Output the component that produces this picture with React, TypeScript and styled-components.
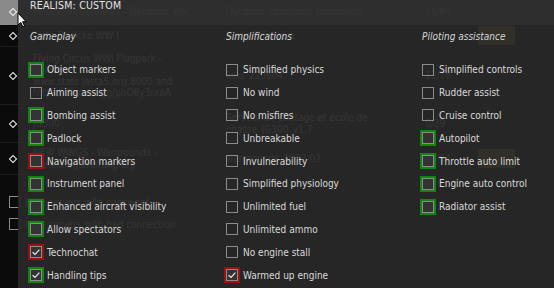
import React from "react";
import styled, { createGlobalStyle } from "styled-components";

type Mark = "green" | "red" | undefined;

interface Option {
  label: string;
  mark?: Mark;
  checked?: boolean;
}

const gameplay: Option[] = [
  { label: "Object markers", mark: "green" },
  { label: "Aiming assist" },
  { label: "Bombing assist", mark: "green" },
  { label: "Padlock", mark: "green" },
  { label: "Navigation markers", mark: "red" },
  { label: "Instrument panel", mark: "green" },
  { label: "Enhanced aircraft visibility", mark: "green" },
  { label: "Allow spectators", mark: "green" },
  { label: "Technochat", mark: "red", checked: true },
  { label: "Handling tips", mark: "green", checked: true },
];

const simplifications: Option[] = [
  { label: "Simplified physics" },
  { label: "No wind" },
  { label: "No misfires" },
  { label: "Unbreakable" },
  { label: "Invulnerability" },
  { label: "Simplified physiology" },
  { label: "Unlimited fuel" },
  { label: "Unlimited ammo" },
  { label: "No engine stall" },
  { label: "Warmed up engine", mark: "red", checked: true },
];

const piloting: Option[] = [
  { label: "Simplified controls" },
  { label: "Rudder assist" },
  { label: "Cruise control" },
  { label: "Autopilot", mark: "green" },
  { label: "Throttle auto limit", mark: "green" },
  { label: "Engine auto control", mark: "green" },
  { label: "Radiator assist", mark: "green" },
];

// server list that sits behind the realism popup
const servers = [
  { h: 25, selected: true, name: ["Finnish Virtualpilots - Dynamic War"], mission: ["Dynamic campaign Normandy"], players: "14/84" },
  { h: 22, name: ["Jasta Boelcke WW I"], mission: ["Arras Offensive"], players: "", badge: true },
  { h: 58, name: ["Flying Circus WWI Flugpark -", "Realism", "www.stats.jasta5.org:8000 and", "https://discord.gg/phQ8y3rxaA"], mission: ["lens_220604"], players: "13/78" },
  { h: 38, name: ["JG300"], mission: ["Serveur de pilotage et ecole de", "chasse_JG300_v1.7"], players: "0/29" },
  { h: 32, name: ["NEW WINGS - Wargrounds -", "www.wingstraining.org"], mission: ["wargrounds_2022-02"], players: "16/64", badge: true },
];

const GlobalStyle = createGlobalStyle`
  html, body {
    margin: 0;
    padding: 0;
    background: #0b0b0b;
  }
`;

const Screen = styled.div`
  position: relative;
  width: 554px;
  height: 288px;
  overflow: hidden;
  background: #0b0b0b;
  font-family: "DejaVu Sans Condensed", "DejaVu Sans", sans-serif;
  font-stretch: condensed;
  font-size: 10px;
`;

const ServerList = styled.div`
  display: flex;
  flex-direction: column;
`;

const ServerRow = styled.div<{ $h: number; $selected?: boolean }>`
  display: grid;
  grid-template-columns: 18px 193px 196px 61px 1fr;
  align-items: center;
  box-sizing: border-box;
  height: ${(p) => p.$h}px;
  background: ${(p) => (p.$selected ? "#8a8a8a" : "#0b0b0b")};
  border-bottom: 1px solid ${(p) => (p.$selected ? "#8a8a8a" : "#1e1e1e")};
  color: #e6e6e6;
  line-height: 11.5px;
`;

const IconCell = styled.div`
  display: flex;
  justify-content: flex-end;
  padding-right: 2px;
`;

const Diamond = styled.span`
  width: 4px;
  height: 4px;
  border: 1px solid #f0f0f0;
  transform: rotate(45deg);
`;

const Cell = styled.div<{ $pad: number }>`
  padding-left: ${(p) => p.$pad}px;
  white-space: nowrap;
  overflow: hidden;
`;

const Badge = styled.span`
  display: block;
  width: 37px;
  height: 19px;
  margin-left: 10px;
  background: #a89420;
`;

const Filters = styled.div`
  display: flex;
  flex-direction: column;
  padding-top: 16px;
`;

const FilterRow = styled.div`
  display: flex;
  align-items: center;
  gap: 4px;
  height: 22px;
  padding-left: 9px;
  color: #e6e6e6;
`;

const FilterBox = styled.span`
  box-sizing: border-box;
  width: 12px;
  height: 12px;
  border: 1px solid #8a8a8a;
`;

const Panel = styled.div`
  position: absolute;
  top: 0;
  left: 18px;
  right: 0;
  bottom: 0;
  padding-left: 12px;
  background: rgba(40, 40, 40, 0.94);
  color: #dadada;
`;

const Title = styled.div`
  font-size: 10.5px;
  line-height: 11px;
  letter-spacing: 0.2px;
  color: #e2e2e2;
`;

const Columns = styled.div`
  display: grid;
  grid-template-columns: repeat(3, 196px);
  margin-top: 19.5px;
`;

const Column = styled.div`
  display: flex;
  flex-direction: column;
`;

const Heading = styled.div`
  font-style: italic;
  line-height: 11px;
  margin-bottom: 17px;
  color: #d6d6d6;
`;

const Row = styled.div`
  display: flex;
  align-items: center;
  gap: 5px;
  height: 22.8px;
  white-space: nowrap;
`;

const Box = styled.span<{ $mark?: Mark }>`
  box-sizing: border-box;
  display: flex;
  align-items: center;
  justify-content: center;
  width: 12px;
  height: 12px;
  flex: none;
  border: 1px solid #8c8c8c;
  background: ${(p) => (p.$mark ? "#333333" : "transparent")};
  outline: ${(p) =>
    p.$mark === "green" ? "2px solid #108510" : p.$mark === "red" ? "2px solid #9c1010" : "none"};
`;

const Cursor = styled.svg`
  position: absolute;
  left: 17px;
  top: 12px;
`;

function Check() {
  return (
    <svg width="10" height="10" viewBox="0 0 10 10">
      <polyline points="1.6,5.2 4,7.4 8.4,2.6" fill="none" stroke="#ececec" strokeWidth="1.2" />
    </svg>
  );
}

function OptionColumn({ title, items }: { title: string; items: Option[] }) {
  return (
    <Column>
      <Heading>{title}</Heading>
      {items.map((o) => (
        <Row key={o.label}>
          <Box $mark={o.mark}>{o.checked ? <Check /> : null}</Box>
          {o.label}
        </Row>
      ))}
    </Column>
  );
}

export default function App() {
  return (
    <Screen>
      <GlobalStyle />
      <ServerList>
        {servers.map((s, i) => (
          <ServerRow key={i} $h={s.h} $selected={s.selected}>
            <IconCell>
              <Diamond />
            </IconCell>
            <Cell $pad={15}>
              {s.name.map((l) => (
                <div key={l}>{l}</div>
              ))}
            </Cell>
            <Cell $pad={15}>
              {s.mission.map((l) => (
                <div key={l}>{l}</div>
              ))}
            </Cell>
            <Cell $pad={18}>{s.players}</Cell>
            <div>{s.badge ? <Badge /> : null}</div>
          </ServerRow>
        ))}
      </ServerList>
      <Filters>
        <FilterRow>
          <FilterBox />
          Hide servers with password
        </FilterRow>
        <FilterRow>
          <FilterBox />
          Hide servers with bad connection
        </FilterRow>
      </Filters>

      <Panel>
        <Title>REALISM: CUSTOM</Title>
        <Columns>
          <OptionColumn title="Gameplay" items={gameplay} />
          <OptionColumn title="Simplifications" items={simplifications} />
          <OptionColumn title="Piloting assistance" items={piloting} />
        </Columns>
      </Panel>

      <Cursor width="11" height="16" viewBox="0 0 11 16">
        <path d="M1 1 L1 13 L3.8 10.4 L5.8 14.8 L7.6 14 L5.6 9.7 L9.2 9.7 Z" fill="#fff" stroke="#000" strokeWidth="1" />
      </Cursor>
    </Screen>
  );
}
